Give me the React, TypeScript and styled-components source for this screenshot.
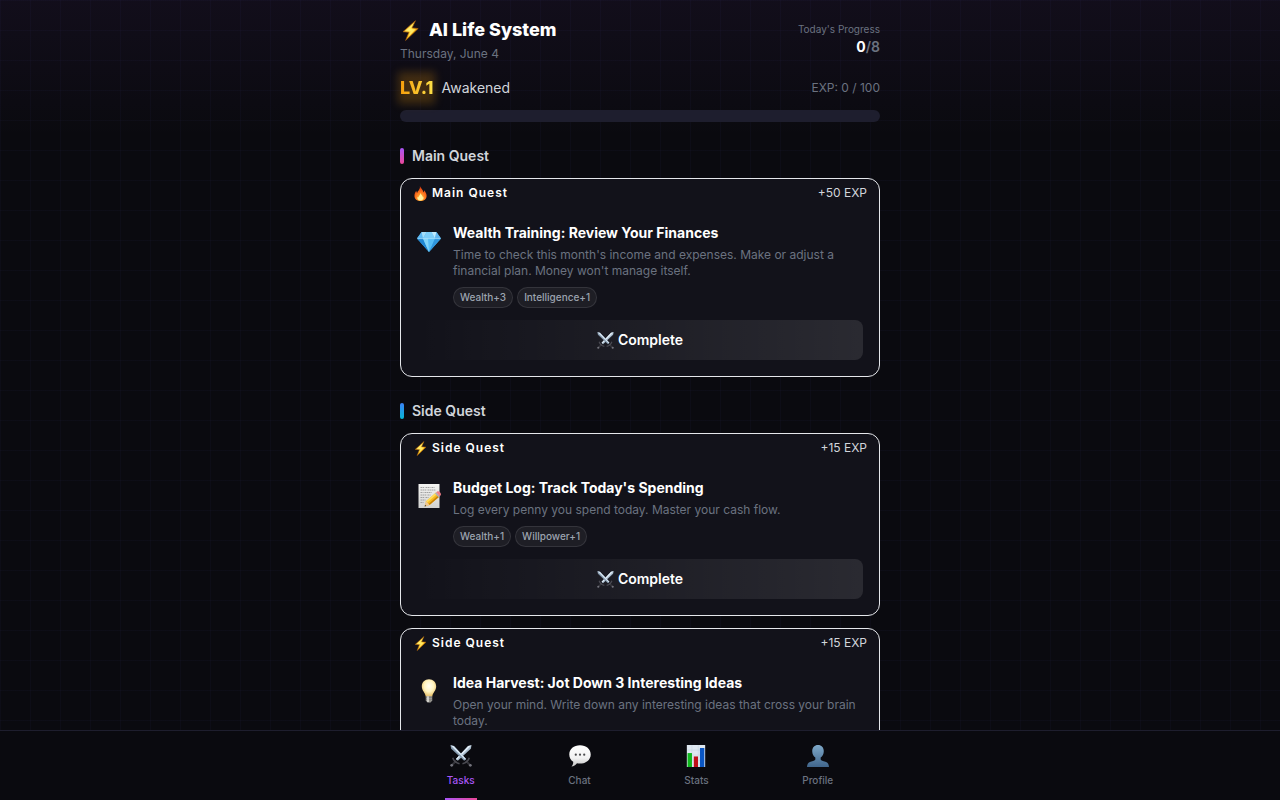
import React from "react";
import styled, { createGlobalStyle } from "styled-components";

const Global = createGlobalStyle`
  *, *::before, *::after { box-sizing: border-box; }
  body {
    margin: 0;
    background-color: #0a0a0f;
    background-image:
      linear-gradient(rgba(99, 102, 241, 0.03) 1px, transparent 1px),
      linear-gradient(90deg, rgba(99, 102, 241, 0.03) 1px, transparent 1px);
    background-size: 30px 30px;
    color: #e5e7eb;
    font-family: Inter, "Liberation Sans", sans-serif;
    font-size: 14px;
    line-height: 20px;
  }
  h1, h2, h3, p { margin: 0; }
  button { font: inherit; color: inherit; border: 0; cursor: pointer; }
  svg { display: block; flex: none; }
`;

const Page = styled.div`
  height: 100vh;
  display: flex;
  flex-direction: column;
`;
const Scroll = styled.div`
  flex: 1;
  min-height: 0;
  overflow-y: auto;
  scrollbar-width: none;
`;
const Column = styled.div`
  max-width: 512px;
  margin: 0 auto;
  padding: 0 16px;
`;
const Header = styled.header`
  padding: 16px 0;
  background: linear-gradient(to bottom, rgba(168, 85, 247, 0.05), transparent);
`;
const Row = styled.div`
  display: flex;
  align-items: center;
  justify-content: space-between;
`;
const Title = styled.h1`
  display: flex;
  align-items: center;
  gap: 8px;
  font-size: 18px;
  line-height: 28px;
  font-weight: 800;
  color: #fff;
`;
const DateText = styled.p`
  margin-top: 2px;
  font-size: 12px;
  line-height: 16px;
  color: #6b7280;
`;
const Progress = styled.div`
  text-align: right;
`;
const ProgressLabel = styled.div`
  font-size: 10px;
  line-height: 15px;
  color: #6b7280;
`;
const ProgressValue = styled.div`
  font-weight: 600;
  color: #6b7280;
  b { font-weight: 700; color: #fff; }
`;
const LevelRow = styled(Row)`
  margin-top: 12px;
  margin-bottom: 8px;
`;
const LevelGroup = styled.div`
  display: flex;
  align-items: center;
  gap: 8px;
  color: #d1d5db;
`;
const Glow = styled.span`
  position: relative;
  isolation: isolate;
  &::before {
    content: "";
    position: absolute;
    inset: -2px;
    z-index: -1;
    background: rgba(245, 158, 11, 0.22);
    filter: blur(4px);
  }
`;
const Level = styled.span`
  display: block;
  font-size: 18px;
  line-height: 28px;
  font-weight: 800;
  color: transparent;
  background: linear-gradient(90deg, #f59e0b, #fde047);
  background-clip: text;
  -webkit-background-clip: text;
`;
const Exp = styled.span`
  font-size: 12px;
  line-height: 16px;
  color: #6b7280;
`;
const Bar = styled.div`
  height: 12px;
  border-radius: 6px;
  background: #1e1e2e;
`;
const Main = styled.main`
  display: flex;
  flex-direction: column;
  gap: 24px;
  padding-top: 8px;
  padding-bottom: 24px;
`;
const Section = styled.section`
  display: flex;
  flex-direction: column;
  gap: 12px;
`;
const SectionTitle = styled.h2<{ $from: string; $to: string }>`
  display: flex;
  align-items: center;
  gap: 8px;
  font-size: 14px;
  line-height: 20px;
  font-weight: 600;
  color: #d1d5db;
  &::before {
    content: "";
    width: 4px;
    height: 16px;
    border-radius: 2px;
    background: linear-gradient(to bottom, ${(p) => p.$from}, ${(p) => p.$to});
  }
`;
const Card = styled.article`
  min-height: 180px;
  border: 1px solid #e5e7eb;
  border-radius: 12px;
  background: #12121a;
`;
const CardHead = styled(Row)`
  padding: 6px 12px;
  font-size: 12px;
  line-height: 16px;
`;
const Kind = styled.span`
  display: flex;
  align-items: center;
  gap: 4px;
  font-weight: 600;
  letter-spacing: 1px;
  color: #fff;
`;
const Reward = styled.span`
  color: #d1d5db;
`;
const CardBody = styled.div`
  padding: 16px;
`;
const Info = styled.div`
  display: flex;
  gap: 12px;
`;
const InfoIcon = styled.div`
  padding-top: 6px;
`;
const InfoText = styled.div`
  flex: 1;
`;
const QuestTitle = styled.h3`
  font-size: 14px;
  line-height: 20px;
  font-weight: 700;
  color: #fff;
`;
const Description = styled.p`
  margin-top: 4px;
  font-size: 12px;
  line-height: 16px;
  color: #6b7280;
`;
const Tags = styled.div`
  display: flex;
  gap: 4px;
  margin-top: 8px;
`;
const Tag = styled.span`
  padding: 2px 6px;
  border: 1px solid rgba(255, 255, 255, 0.1);
  border-radius: 11px;
  background: rgba(255, 255, 255, 0.05);
  font-size: 10px;
  line-height: 15px;
  font-weight: 500;
  color: #9ca3af;
`;
const Complete = styled.button`
  display: flex;
  align-items: center;
  justify-content: center;
  gap: 4px;
  width: 100%;
  margin-top: 12px;
  padding: 10px;
  border-radius: 8px;
  background: linear-gradient(90deg, transparent, rgba(255, 255, 255, 0.1));
  font-weight: 600;
  color: #fff;
`;
const Nav = styled.nav`
  border-top: 1px solid #1e1e2e;
  background: #0a0a0f;
`;
const NavInner = styled.div`
  display: flex;
  justify-content: space-around;
  max-width: 480px;
  margin: 0 auto;
`;
const NavItem = styled.button<{ $active?: boolean }>`
  position: relative;
  display: flex;
  flex-direction: column;
  align-items: center;
  gap: 6px;
  padding: 14px 16px 12px;
  background: none;
  font-size: 10px;
  line-height: 15px;
  font-weight: 500;
  color: ${(p) => (p.$active ? "#a855f7" : "#6b7280")};
  &::after {
    content: "";
    display: ${(p) => (p.$active ? "block" : "none")};
    position: absolute;
    bottom: 0;
    width: 32px;
    height: 2px;
    background: linear-gradient(90deg, #a855f7, #ec4899);
  }
`;

type IconProps = { size: number };

const Bolt = ({ size }: IconProps) => (
  <svg width={size} height={size} viewBox="0 0 24 24" aria-hidden="true">
    <defs>
      <linearGradient id="bolt" x1="0" y1="0" x2="1" y2="1">
        <stop offset="0" stopColor="#d97a08" />
        <stop offset="0.45" stopColor="#ffe14d" />
        <stop offset="0.6" stopColor="#ffc21a" />
        <stop offset="1" stopColor="#b85e05" />
      </linearGradient>
    </defs>
    <path d="M17.6.8 3.4 13.4l6.8.6L6.4 23.4 20.8 9.8l-7-.8z" fill="url(#bolt)" stroke="#a65a08" strokeWidth=".8" strokeLinejoin="round" />
    <path d="M15.2 4.2 6.2 12.3l6 .6-2.6 6.2 8-8.2-6-.6z" fill="#fff27a" opacity=".75" />
  </svg>
);

const Fire = ({ size }: IconProps) => (
  <svg width={size} height={size} viewBox="0 0 24 24" aria-hidden="true">
    <defs>
      <radialGradient id="fire" cx=".5" cy=".8" r=".75">
        <stop offset="0" stopColor="#ffc53a" />
        <stop offset=".5" stopColor="#ff7a1f" />
        <stop offset="1" stopColor="#d9330f" />
      </radialGradient>
    </defs>
    <path d="M11 0c1.2 3.500 5.200 5.700 5.600 10.200.8-.8 1.200-2 1-3.400 2.600 2.600 4.200 5.600 4.200 9 0 4.900-4.200 8.200-9.700 8.200S2.300 20.700 2.300 15.900c0-3.800 1.500-6.200 2.900-8.400.1 1.700.6 2.800 1.500 3.500C7.600 7.500 12 5.500 11 0z" fill="url(#fire)" />
    <path d="M12.200 11c.4 2.600 3.700 4.600 3.900 7.600.3-.5.700-1.100.7-1.700 1.100 3.400-1 6.300-4.700 6.300s-6-2.600-4.900-6.200c.3.800.6 1.100 1.200 1.500.3-3 3.400-4.300 3.800-7.500z" fill="#fff2a0" />
  </svg>
);

const Gem = ({ size }: IconProps) => (
  <svg width={size} height={size} viewBox="0 0 24 24" aria-hidden="true">
    <path d="M4.600 3h14.800L24 9.600 12 23 0 9.600z" fill="#4fb3ef" />
    <path d="M4.600 3 6 9.600H0z" fill="#5cb8f2" />
    <path d="M4.600 3h5L6 9.600z" fill="#a5def9" />
    <path d="M9.600 3h5l3.400 6.600H6z" fill="#7ccdf7" />
    <path d="M14.600 3h4.800L18 9.600z" fill="#bfe9fc" />
    <path d="M19.400 3 24 9.600h-6z" fill="#62b5ec" />
    <path d="M0 9.600h6L12 23z" fill="#1f86d2" />
    <path d="M6 9.600h12L12 23z" fill="#55bdf5" />
    <path d="M6 9.600h5L12 23z" fill="#82d5fa" />
    <path d="M18 9.600h6L12 23z" fill="#2f96dd" />
    <path d="M.6 9.600h22.800" stroke="#c5ecfd" strokeWidth=".6" />
  </svg>
);

const Memo = ({ size }: IconProps) => (
  <svg width={size} height={size} viewBox="0 0 24 24" aria-hidden="true">
    <defs>
      <linearGradient id="paper" x1="0" y1="0" x2="0" y2="1">
        <stop offset="0" stopColor="#f4f4f2" />
        <stop offset="1" stopColor="#d2d2d0" />
      </linearGradient>
    </defs>
    <path d="M1.500 0h21v24h-21z" fill="url(#paper)" />
    <path d="M3.500 3.500h4m1 0h5m1 0h3M3.500 6h6m1 0h8M3.500 8.500h3m1 0h7M3.500 11h6m1 0h3M3.500 13.500h4m1 0h3M3.500 16h5M3.500 18.500h3" stroke="#8f8f90" strokeWidth=".8" strokeDasharray="1.600 .5" fill="none" />
    <path d="m7.600 22.500 1.500-5.300L19 8.600l3.500 3.800-10 8.700z" fill="#f5b921" />
    <path d="m9.100 17.200 9.900-8.600 1.200 1.300-9.900 8.600z" fill="#ffdc5a" />
    <path d="m11.500 19.900 9.900-8.700 1.100 1.200-10 8.700z" fill="#c98208" />
    <path d="m7.600 22.500 1.500-5.300 3.400 3.900z" fill="#edc795" />
    <path d="m7.600 22.500.5-1.800 1.200 1.200z" fill="#333" />
    <path d="m18 9.500 1.200-1.100 3.500 3.800-1.200 1.100z" fill="#a9b4bb" />
    <path d="m19.200 8.400 1-.9c1.600-1.200 4.600 1.800 3.500 3.700l-1 1z" fill="#ef7d87" />
  </svg>
);

const Bulb = ({ size }: IconProps) => (
  <svg width={size} height={size} viewBox="0 0 24 24" aria-hidden="true">
    <defs>
      <radialGradient id="bulb" cx=".5" cy=".4" r=".6">
        <stop offset="0" stopColor="#fffef4" />
        <stop offset=".55" stopColor="#fff3c0" />
        <stop offset="1" stopColor="#e5bd66" />
      </radialGradient>
    </defs>
    <path d="M12 .2c4.200 0 7.200 3.100 7.200 7.100 0 4.500-3.500 6.300-3.900 10.200H8.700C8.300 13.600 4.800 11.800 4.800 7.300 4.800 3.300 7.800.2 12 .2z" fill="url(#bulb)" />
    <path d="M8.800 17.300h6.400v4.300l-1.700 2h-3l-1.700-2z" fill="#a3a19c" />
    <path d="M8.800 18.600h6.400M8.800 20.300h6.400M9.300 22h5.400" stroke="#666460" strokeWidth=".6" />
    <path d="M10.200 17.300h1.600v5.800h-1.600z" fill="#e0dfdb" />
  </svg>
);

const Swords = ({ size }: IconProps) => (
  <svg width={size} height={size} viewBox="0 0 24 24" aria-hidden="true">
    <path d="M23.500.3 22.700 4 8.500 17.200l-2-2L19.800 1.200z" fill="#a9bccd" />
    <path d="M23.500.3 7.500 16.200l-1-1L19.800 1.200z" fill="#e2eef8" />
    <path d="m1.600 22.400 5.200-5.200" stroke="#34343b" strokeWidth="2.200" />
    <path d="M3 13.800c.8 2.600 3.600 5.600 7.400 6.600" stroke="#4b4b53" strokeWidth="1.700" fill="none" />
    <circle cx="1.800" cy="22.200" r="1.500" fill="#73737c" />
    <path d="M.5.300 1.300 4l14.200 13.200 2-2L4.200 1.200z" fill="#8499ad" />
    <path d="M.5.300l16 15.900 1-1L4.200 1.200z" fill="#d8e7f4" />
    <path d="m22.400 22.400-5.200-5.200" stroke="#34343b" strokeWidth="2.200" />
    <path d="M21 13.800c-.8 2.600-3.600 5.600-7.400 6.600" stroke="#4b4b53" strokeWidth="1.700" fill="none" />
    <circle cx="22.200" cy="22.200" r="1.500" fill="#73737c" />
  </svg>
);

const Bubble = ({ size }: IconProps) => (
  <svg width={size} height={size} viewBox="0 0 24 24" aria-hidden="true">
    <defs>
      <linearGradient id="bubble" x1="0" y1="0" x2="0" y2="1">
        <stop offset="0" stopColor="#fff" />
        <stop offset=".6" stopColor="#f2f2f2" />
        <stop offset="1" stopColor="#c4c4c4" />
      </linearGradient>
    </defs>
    <path d="M12 .4c6.800 0 11.700 4.300 11.700 10S18.800 20.300 12 20.300c-1.200 0-2.300-.1-3.300-.4-1.500 2-3.500 3.400-6 3.500 1.400-1.300 2-3 1.900-5C1.900 16.500.3 13.700.3 10.400.3 4.700 5.200.4 12 .4z" fill="url(#bubble)" />
    <g fill="#4a4a4c">
      <circle cx="7.400" cy="10.600" r="1.200" />
      <circle cx="12" cy="10.600" r="1.200" />
      <circle cx="16.600" cy="10.600" r="1.200" />
    </g>
  </svg>
);

const Chart = ({ size }: IconProps) => (
  <svg width={size} height={size} viewBox="0 0 24 24" aria-hidden="true">
    <path d="M2 0h20v24H2z" fill="#dfe8f1" />
    <path d="M2.500 5.500h19M2.500 11h19M2.500 16.500h19M7.500 0v24M14.500 0v24" stroke="#c7d5e2" strokeWidth=".6" />
    <path d="M2.800 8.800h4.800V24H2.800z" fill="#10b81d" />
    <path d="M9.600 12.500h4.600V24H9.600z" fill="#c01018" />
    <path d="M16.300 3.300h4.800V24h-4.800z" fill="#0a56c4" />
  </svg>
);

const Person = ({ size }: IconProps) => (
  <svg width={size} height={size} viewBox="0 0 24 24" aria-hidden="true">
    <defs>
      <linearGradient id="person" x1="0" y1="0" x2="0" y2="1">
        <stop offset="0" stopColor="#7fa9c9" />
        <stop offset="1" stopColor="#41668c" />
      </linearGradient>
    </defs>
    <path d="M12 0c3.800 0 6.300 2.700 6.300 6.700 0 3-1.400 5.700-3.400 7v1.900c0 1 .8 1.400 2.300 1.800 4 .8 6.600 2 6.800 6.600H0c.2-4.600 2.800-5.800 6.800-6.600 1.500-.4 2.300-.8 2.300-1.800v-1.900c-2-1.300-3.400-4-3.400-7C5.700 2.700 8.200 0 12 0z" fill="url(#person)" />
  </svg>
);

type Quest = {
  icon: React.ReactNode;
  title: string;
  text: string;
  exp: number;
  tags?: string[];
};

const mainQuests: Quest[] = [
  {
    icon: <Gem size={24} />,
    title: "Wealth Training: Review Your Finances",
    text: "Time to check this month's income and expenses. Make or adjust a financial plan. Money won't manage itself.",
    exp: 50,
    tags: ["Wealth+3", "Intelligence+1"],
  },
];
const sideQuests: Quest[] = [
  {
    icon: <Memo size={24} />,
    title: "Budget Log: Track Today's Spending",
    text: "Log every penny you spend today. Master your cash flow.",
    exp: 15,
    tags: ["Wealth+1", "Willpower+1"],
  },
  {
    icon: <Bulb size={24} />,
    title: "Idea Harvest: Jot Down 3 Interesting Ideas",
    text: "Open your mind. Write down any interesting ideas that cross your brain today.",
    exp: 15,
  },
];

function QuestCard({ quest, kind, icon }: { quest: Quest; kind: string; icon: React.ReactNode }) {
  return (
    <Card>
      <CardHead>
        <Kind>{icon}{kind}</Kind>
        <Reward>+{quest.exp} EXP</Reward>
      </CardHead>
      <CardBody>
        <Info>
          <InfoIcon>{quest.icon}</InfoIcon>
          <InfoText>
            <QuestTitle>{quest.title}</QuestTitle>
            <Description>{quest.text}</Description>
            {quest.tags && <Tags>{quest.tags.map((t) => <Tag key={t}>{t}</Tag>)}</Tags>}
          </InfoText>
        </Info>
        {quest.tags && <Complete type="button"><Swords size={17} />Complete</Complete>}
      </CardBody>
    </Card>
  );
}

export default function App() {
  return (
    <Page>
      <Global />
      <Scroll>
        <Header>
          <Column>
            <Row>
              <div>
                <Title><Bolt size={21} />AI Life System</Title>
                <DateText>Thursday, June 4</DateText>
              </div>
              <Progress>
                <ProgressLabel>Today's Progress</ProgressLabel>
                <ProgressValue><b>0</b>/8</ProgressValue>
              </Progress>
            </Row>
            <LevelRow>
              <LevelGroup><Glow><Level>LV.1</Level></Glow>Awakened</LevelGroup>
              <Exp>EXP: 0 / 100</Exp>
            </LevelRow>
            <Bar />
          </Column>
        </Header>
        <Column>
          <Main>
            <Section>
              <SectionTitle $from="#a855f7" $to="#ec4899">Main Quest</SectionTitle>
              {mainQuests.map((q) => <QuestCard key={q.title} quest={q} kind="Main Quest" icon={<Fire size={15} />} />)}
            </Section>
            <Section>
              <SectionTitle $from="#3b82f6" $to="#06b6d4">Side Quest</SectionTitle>
              {sideQuests.map((q) => <QuestCard key={q.title} quest={q} kind="Side Quest" icon={<Bolt size={15} />} />)}
            </Section>
          </Main>
        </Column>
      </Scroll>
      <Nav>
        <NavInner>
          <NavItem type="button" $active><Swords size={22} />Tasks</NavItem>
          <NavItem type="button"><Bubble size={22} />Chat</NavItem>
          <NavItem type="button"><Chart size={22} />Stats</NavItem>
          <NavItem type="button"><Person size={22} />Profile</NavItem>
        </NavInner>
      </Nav>
    </Page>
  );
}
